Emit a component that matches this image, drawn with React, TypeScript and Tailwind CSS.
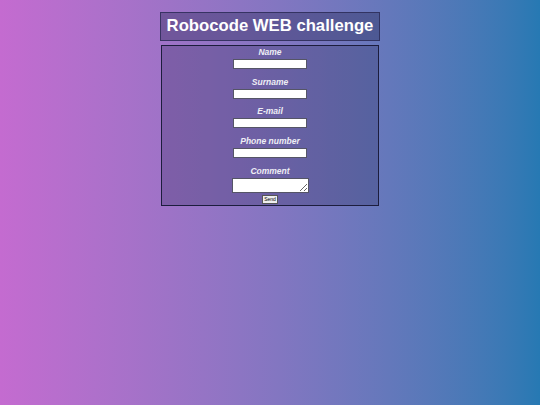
const fields = ["Name", "Surname", "E-mail", "Phone number"];

const App = () => {
  return (
    <div
      className="min-h-[405px] w-full bg-gradient-to-r from-[#c46bd0] to-[#2679b3] flex flex-col items-center"
      style={{ fontFamily: '"Liberation Sans", Arial, sans-serif' }}
    >
      <h1 className="mt-[12px] w-[220px] h-[29px] flex items-center justify-center bg-[#1e1f4a]/35 border border-[#2a2a55]/80 text-white text-[16.7px] font-bold leading-none whitespace-nowrap">
        Robocode WEB challenge
      </h1>

      <form className="mt-[4px] w-[218px] h-[161px] bg-[#1e1f4a]/25 border border-[#1c1d3d] flex flex-col items-center pt-[1px]">
        {fields.map((field) => (
          <div key={field} className="flex flex-col items-center mb-[7.7px]">
            <label className="text-[8.5px] leading-[11px] italic font-bold text-[#eeeef5]">
              {field}
            </label>
            <input
              type="text"
              className="mt-[1px] w-[74px] h-[10px] bg-white border border-[#555566]"
            />
          </div>
        ))}
        <div className="flex flex-col items-center">
          <label className="text-[8.5px] leading-[11px] italic font-bold text-[#eeeef5]">
            Comment
          </label>
          <textarea className="mt-[1px] w-[77px] h-[15px] bg-white border border-[#555566] resize-y" />
        </div>
        <button
          type="button"
          className="mt-[2px] w-[16px] h-[9px] bg-[#efefef] border border-[#555] text-[5px] leading-none text-black flex items-center justify-center"
        >
          Send
        </button>
      </form>
    </div>
  );
};

export default App;
